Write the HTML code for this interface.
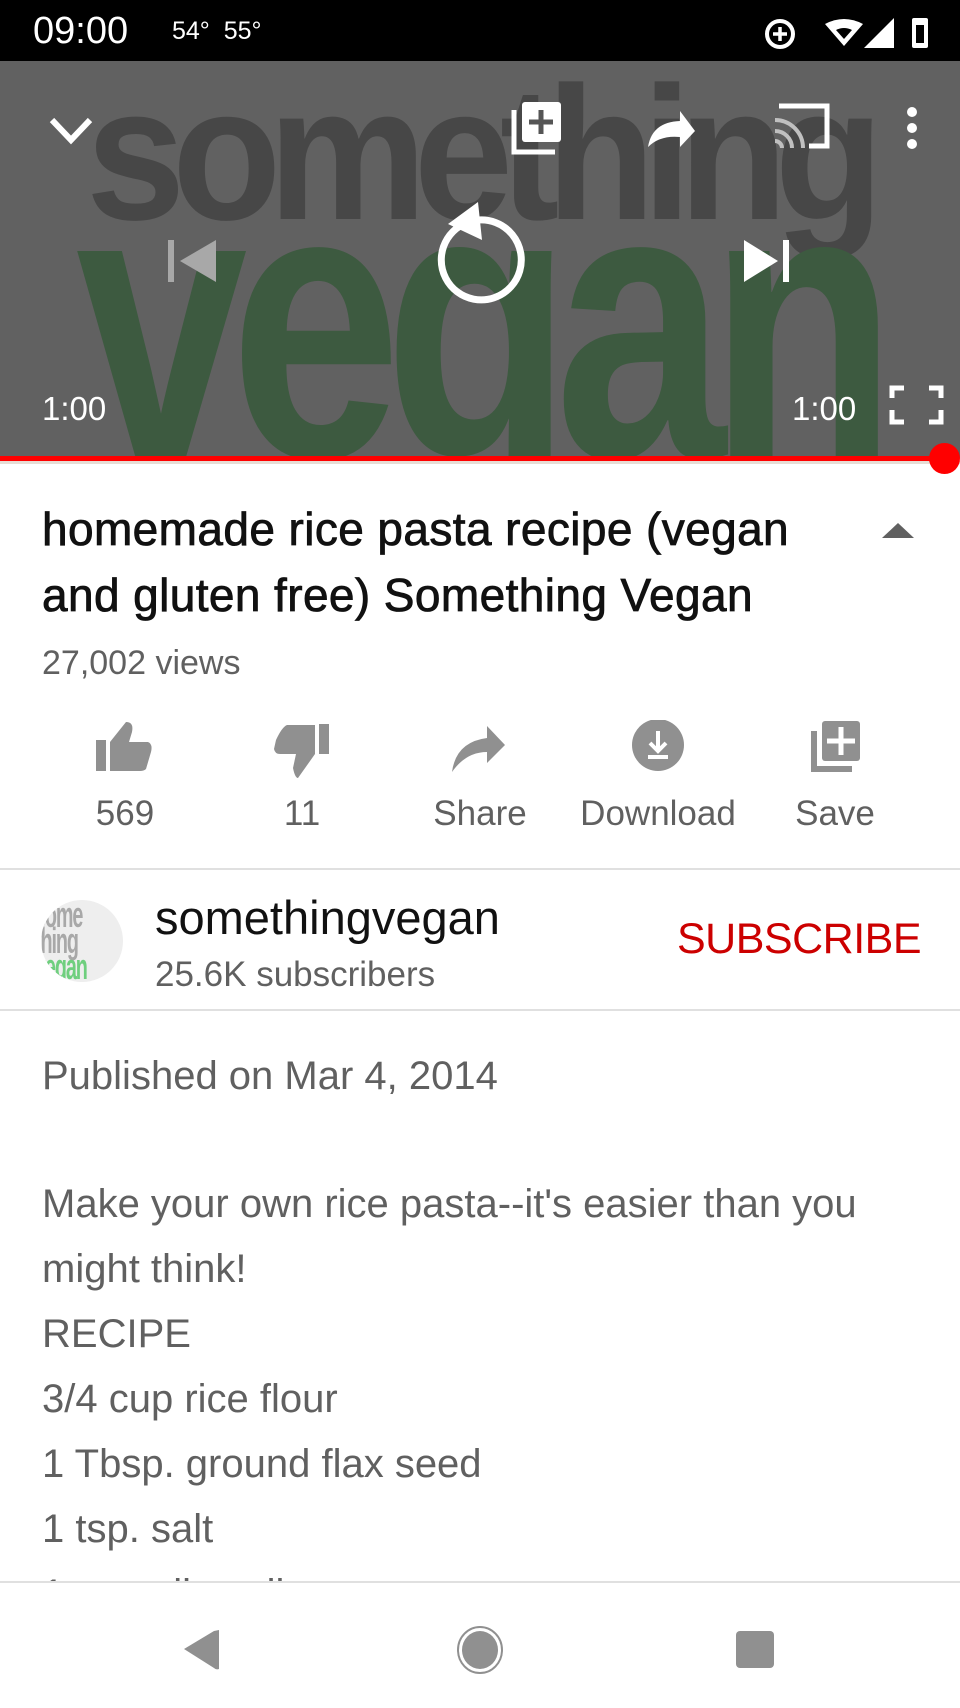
<!DOCTYPE html>
<html><head><meta charset="utf-8"><style>
*{margin:0;padding:0;box-sizing:border-box}
body{width:960px;height:1706px;overflow:hidden;background:#fff;font-family:"Liberation Sans",Roboto,sans-serif;position:relative}
.a{position:absolute}
.status{top:0;left:0;width:960px;height:61px;background:#000;color:#fff}
.video{top:61px;left:0;width:960px;height:397px;background:#616161;overflow:hidden}
.bg1{font-family:"Liberation Sans",sans-serif;font-weight:bold;color:#474747;font-size:190px;letter-spacing:-14px;transform:scaleX(0.94);transform-origin:0 0;left:86px;top:-16px;white-space:nowrap}
.bg2{font-family:"Liberation Sans",sans-serif;font-weight:bold;color:#3d5a40;font-size:390px;letter-spacing:-22px;transform:scaleX(0.79);transform-origin:0 0;left:76px;top:37px;white-space:nowrap}
.t{color:#fff;font-size:33px}
.title{left:42px;top:496px;font-size:46px;letter-spacing:0.4px;-webkit-text-stroke:0.8px #111;line-height:66px;color:#111;width:880px;white-space:nowrap}
.gray{color:#606060}
.lbl{font-size:35px;color:#606060;top:794px;text-align:center;width:180px}
.desc{left:42px;top:1174px;font-size:40px;line-height:65px;color:#606060}
</style></head><body>
<div class="a status">
 <div class="a" style="left:33px;top:10px;font-size:38px">09:00</div>
 <div class="a" style="left:172px;top:17px;font-size:25px">54°&nbsp; 55°</div>
 <svg class="a" style="left:760px;top:12px" width="190" height="40" viewBox="0 0 190 40">
  <circle cx="20" cy="22" r="13" fill="none" stroke="#fff" stroke-width="4"/><path d="M20 15v14M13 22h14" stroke="#fff" stroke-width="3.5"/>
  <path d="M65 12 Q84 2 103 12 L84 34 Z" fill="#fff"/><path d="M76 18 Q84 14 92 18 L84 27Z" fill="#000"/>
  <path d="M134 6 L134 36 L104 36 Z" fill="#fff"/>
  <rect x="152" y="6" width="16" height="30" rx="2" fill="#fff"/><rect x="156" y="13" width="8" height="18" fill="#000"/>
 </svg>
</div>
<div class="a video">
 <div class="a bg1">something</div>
 <div class="a bg2">vegan</div>
 <svg class="a" style="left:0;top:0" width="960" height="397" viewBox="0 61 960 397">
  <path d="M52 120 L71 140 L90 120" fill="none" stroke="#fff" stroke-width="6"/>
  <path d="M514 110 v42 h41" fill="none" stroke="#fff" stroke-width="5"/>
  <rect x="522" y="102" width="39" height="40" rx="3" fill="#fff"/><path d="M541 110v24M529 122h24" stroke="#555" stroke-width="5"/>
  <path d="M648 147 Q652 122 680 121 L680 111 L695 131 L680 147 L680 137 Q660 135 648 147Z" fill="#fff"/>
  <path d="M779 106 h48 v40 h-18" fill="none" stroke="#fff" stroke-width="5"/>
  <path d="M775 120 a28 28 0 0 1 28 28 M775 131 a17 17 0 0 1 17 17 M775 141 a7 7 0 0 1 7 7" fill="none" stroke="#c0c0c0" stroke-width="4"/>
  <circle cx="912" cy="112" r="5" fill="#fff"/><circle cx="912" cy="128" r="5" fill="#fff"/><circle cx="912" cy="144" r="5" fill="#fff"/>
  <path d="M171 240 v42" stroke="#a8a8a8" stroke-width="6"/><path d="M216 240 L180 261 L216 282Z" fill="#a8a8a8"/>
  <path d="M744 240 L778 261 L744 282Z" fill="#fff"/><path d="M786 240 v42" stroke="#fff" stroke-width="6"/>
  <path d="M460 226 A40 40 0 1 0 478 220" fill="none" stroke="#fff" stroke-width="7"/>
  <path d="M478 202 L448 224 L482 240Z" fill="#fff"/>
  <path d="M892 398 v-10 h12 M929 388 h12 v10 M892 410 v12 h12 M929 422 h12 v-12" fill="none" stroke="#fff" stroke-width="5"/>
 </svg>
 <div class="a t" style="left:42px;top:329px">1:00</div>
 <div class="a t" style="left:792px;top:329px">1:00</div>
</div>
<div class="a" style="left:0;top:456px;width:945px;height:5px;background:#f00"></div>
<div class="a" style="left:0;top:461px;width:960px;height:3px;background:#e6ddd5"></div>
<div class="a" style="left:929px;top:443px;width:31px;height:31px;border-radius:50%;background:#f00"></div>
<div class="a title">homemade rice pasta recipe (vegan<br>and gluten free) Something Vegan</div>
<svg class="a" style="left:880px;top:520px" width="36" height="20"><path d="M2 18 L18 3 L34 18Z" fill="#606060"/></svg>
<div class="a gray" style="left:42px;top:644px;font-size:34px">27,002 views</div>
<svg class="a" style="left:0;top:720px" width="960" height="60" viewBox="0 720 960 60">
 <g fill="#909090">
 <rect x="96" y="740" width="10" height="31"/><path d="M110 771 V742 L126 722 Q134 722 132 732 L129 742 H148 Q153 744 151 752 L146 769 Q144 771 140 771Z"/>
 <path d="M319 724 h10 v30 h-10z"/><path d="M315 754 V725 H287 Q282 727 276 740 L274 749 Q275 754 280 754 H296 L293 768 Q295 778 298 778 L315 754Z"/>
 <path d="M452 772 Q456 742 487 738 V726 L505 745 L487 763 V752 Q466 752 452 772Z"/>
 <circle cx="658" cy="745" r="26"/>
 <path d="M814 731 v38 h38" fill="none" stroke="#909090" stroke-width="6"/><rect x="822" y="721" width="38" height="40" rx="3"/>
 </g>
 <path d="M658 731 v20 M650 743 l8 8 8-8 M648 757 h20" fill="none" stroke="#fff" stroke-width="4"/>
 <path d="M841 727 v28 M827 741 h28" stroke="#fff" stroke-width="5"/>
</svg>
<div class="a lbl" style="left:35px">569</div>
<div class="a lbl" style="left:212px">11</div>
<div class="a lbl" style="left:390px">Share</div>
<div class="a lbl" style="left:568px">Download</div>
<div class="a lbl" style="left:745px">Save</div>
<div class="a" style="left:0;top:868px;width:960px;height:2px;background:#e0e0e0"></div>
<div class="a" style="left:41px;top:900px;width:82px;height:82px;border-radius:50%;overflow:hidden;background:#eee">
 <div class="a" style="left:-6px;top:2px;font-weight:bold;font-size:36px;line-height:26px;color:#a8a8a8;transform:scaleX(.55);transform-origin:0 0;letter-spacing:-2px">some<br>thing<br><span style="color:#6fcf7e">vegan</span></div>
</div>
<div class="a" style="left:155px;top:890px;font-size:47px;color:#111">somethingvegan</div>
<div class="a gray" style="left:155px;top:955px;font-size:35px">25.6K subscribers</div>
<div class="a" style="left:677px;top:915px;font-size:43px;color:#cc0000;letter-spacing:-0.5px">SUBSCRIBE</div>
<div class="a" style="left:0;top:1009px;width:960px;height:2px;background:#e0e0e0"></div>
<div class="a gray" style="left:42px;top:1054px;font-size:40px">Published on Mar 4, 2014</div>
<div class="a desc" style="top:1172px">Make your own rice pasta--it's easier than you<br>might think!<br>RECIPE<br>3/4 cup rice flour<br>1 Tbsp. ground flax seed<br>1 tsp. salt<br>1 tsp. olive oil</div>
<div class="a" style="left:0;top:1581px;width:960px;height:125px;background:#fff;border-top:2px solid #e0e0e0">
 <svg class="a" style="left:0;top:0" width="960" height="125" viewBox="0 1581 960 125">
  <path d="M219 1628 L219 1667 Q216 1668 214 1666 L184 1647 L214 1629 Z" fill="#909090"/>
  <ellipse cx="480" cy="1648" rx="22" ry="23" fill="#fff" stroke="#909090" stroke-width="2"/><ellipse cx="480" cy="1648" rx="18" ry="19" fill="#909090"/>
  <rect x="736" y="1629" width="38" height="37" rx="4" fill="#909090"/>
 </svg>
</div>
</body></html>
